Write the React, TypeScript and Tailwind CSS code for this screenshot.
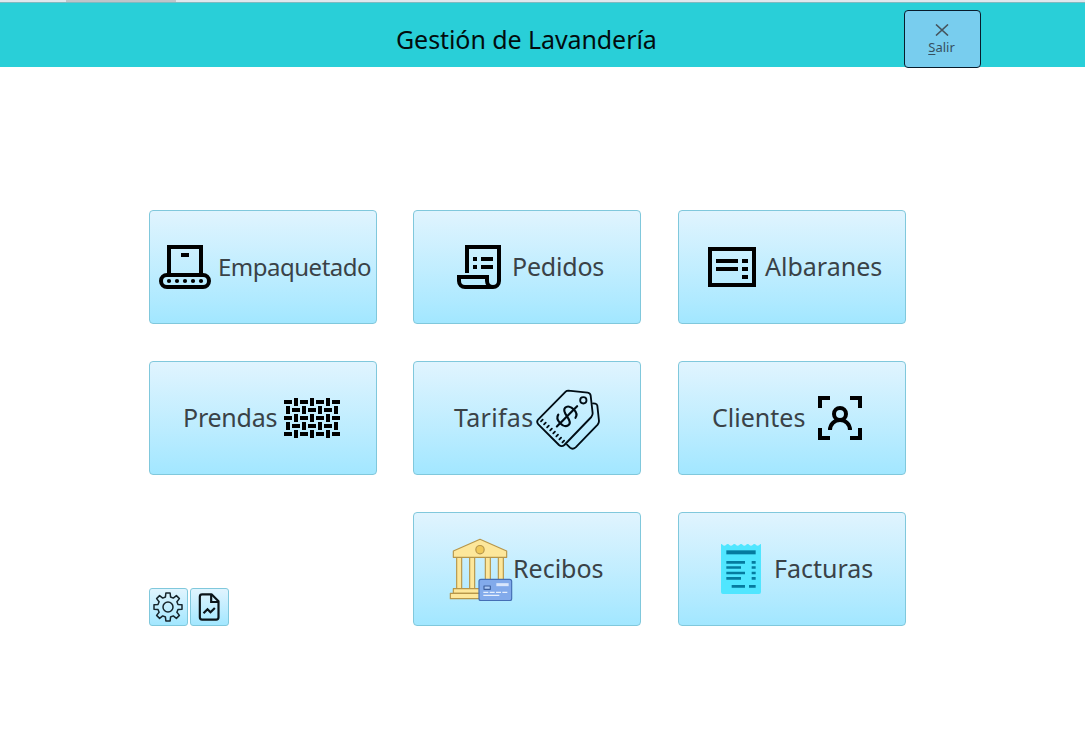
import React from "react";

function PackageIcon() {
  return (
    <svg className="h-16 w-[52px] shrink-0" viewBox="57 105 156 192" fill="none" stroke="#000" strokeWidth="12">
      <path d="M87 225V141H183V225" />
      <path d="M123 165H147" />
      <rect x="63" y="225" width="144" height="36" rx="18" />
      <g fill="#000" stroke="none">
        {[87, 111, 135, 159, 183].map((x) => (
          <circle key={x} cx={x} cy="243" r="6.3" />
        ))}
      </g>
    </svg>
  );
}

function OrderIcon() {
  return (
    <svg className="h-16 w-11 shrink-0" viewBox="156 105 132 192" fill="none" stroke="#000" strokeWidth="12">
      <path d="M186 219V141H282V243a18 18 0 0 1-18 18H180a18 18 0 0 1-18-18V231H246V243a18 18 0 0 0 18 18" />
      <path d="M204 177h12M228 177h36M204 201h12M228 201h36" />
    </svg>
  );
}

function NoteIcon() {
  return (
    <svg className="h-16 w-12 shrink-0" viewBox="114 105 144 192" fill="none" stroke="#000" strokeWidth="12">
      <rect x="120" y="147" width="132" height="108" />
      <path d="M138 183h66M138 207h66M216 183h18M216 207h18M216 231h18" />
    </svg>
  );
}

function FabricIcon() {
  return (
    <svg className="h-16 w-14 shrink-0" viewBox="432 102 168 192" fill="none" stroke="#000" strokeWidth="12">
      {[150, 198, 246].map((y) => (
        <g key={y}>
          <path d={`M432 ${y}h24M480 ${y}h24M528 ${y}h24M576 ${y}h24`} />
          <path d={`M468 ${y - 12}v24M516 ${y - 12}v24M564 ${y - 12}v24`} />
        </g>
      ))}
      {[174, 222].map((y) => (
        <g key={y}>
          <path d={`M456 ${y}h24M504 ${y}h24M552 ${y}h24`} />
          <path d={`M444 ${y - 12}v24M492 ${y - 12}v24M540 ${y - 12}v24M588 ${y - 12}v24`} />
        </g>
      ))}
    </svg>
  );
}

function TagIcon() {
  return (
    <svg
      className="size-16 shrink-0"
      viewBox="393 102 192 192"
      fill="none"
      stroke="#000c14"
      strokeWidth="5.5"
      strokeLinecap="round"
      strokeLinejoin="round"
    >
      <path d="M490 116L548 122Q556 123 557 131L563 184Q563 190 559 195L478 279Q470 286 462 279L400 217Q393 209 400 202L482 119Q485 116 490 116Z" />
      <path d="M564 154L571 155Q576 156 577 161L582 207Q582 213 578 218L512 286Q503 294 495 287L486 278" />
      <circle cx="535" cy="145" r="9.5" />
      {[0, 1, 2, 3, 4, 5, 6, 7].map((i) => (
        <path key={i} d={`M${408 + i * 9.2} ${208 + i * 9}l5 -5`} strokeWidth="5.5" />
      ))}
      <g transform="translate(486 193) rotate(45)" strokeWidth="6.5">
        <path d="M0 -43V43" />
        <path d="M21 -15C19 -25 11 -29 0 -29C-13 -29 -22 -23 -22 -14C-22 -5 -12 -2 0 0C12 2 22 6 22 14C22 23 13 29 0 29C-11 29 -20 25 -22 15" />
      </g>
    </svg>
  );
}

function ClientIcon() {
  return (
    <svg className="h-16 w-11 shrink-0" viewBox="444 102 132 192" fill="none" stroke="#000" strokeWidth="12">
      <path d="M450 168V138H480M540 138H570V168M570 228V258H540M480 258H450V228" />
      <circle cx="510" cy="186" r="18" />
      <path d="M480 234a30 30 0 0 1 60 0" />
    </svg>
  );
}

function BankIcon() {
  return (
    <svg className="size-16 shrink-0" viewBox="132 99 192 192" fill="#fde79b" stroke="#b7964a" strokeWidth="3.5" strokeLinejoin="round">
      {[155, 194, 241, 280].map((x) => (
        <rect key={x} x={x} y="160" width="15" height="94" />
      ))}
      <path d="M225 106L305 141V160H145V141Z" />
      <circle cx="225" cy="137" r="12.5" fill="#f0c95a" />
      <rect x="145" y="254" width="162" height="14" />
      <rect x="136" y="268" width="170" height="16" />
      <rect x="222" y="226" width="98" height="64" rx="6" fill="#82aaeb" stroke="#456fb5" />
      <rect x="237" y="246" width="19" height="10" fill="#a9c7f5" stroke="#3d609f" />
      <path d="M274 242H311" stroke="#d9e6fc" strokeWidth="9" />
      <path d="M235 265h15M254 265h15M273 265h15M292 265h15M235 274h48" stroke="#e6effd" strokeWidth="4" />
    </svg>
  );
}

function InvoiceIcon() {
  return (
    <svg className="h-16 w-10 shrink-0" viewBox="153 99 120 192" fill="none" stroke="#057b9f">
      <path
        d="M153 120q4 0 5 3q5 4 10 0q2-3 5-3q4 0 5 3q5 4 10 0q2-3 5-3q4 0 5 3q5 4 10 0q2-3 5-3q4 0 5 3q5 4 10 0q2-3 5-3q4 0 5 3q5 4 10 0q2-3 5-3q4 0 5 3q5 4 10 0q2-3 5-3V264q0 6-6 6H159q-6 0-6-6Z"
        fill="#50e6ff"
        stroke="none"
      />
      <path d="M169 145h88" strokeWidth="12" />
      <path
        d="M169 175h56M169 190.500h44M169 207h56M169 223h44M185 247h40M237 247h20M245 175h12M245 190.500h12M245 207h12M245 223h12"
        strokeWidth="8"
      />
    </svg>
  );
}

const gearPath = (() => {
  const points: string[] = [];
  for (let i = 0; i < 8; i++) {
    const middle = (i * Math.PI) / 4;
    const corners: [number, number][] = [
      [-0.25, 31],
      [-0.15, 42.5],
      [0.15, 42.5],
      [0.25, 31],
    ];
    corners.forEach(([offset, radius]) => {
      const x = radius * Math.sin(middle + offset);
      const y = -radius * Math.cos(middle + offset);
      points.push(`${x.toFixed(1)} ${y.toFixed(1)}`);
    });
  }
  return `M${points.join("L")}Z`;
})();

function GearIcon() {
  return (
    <svg className="size-8" viewBox="-48 -48 96 96" fill="none" stroke="#17252c" strokeWidth="4.5" strokeLinejoin="round">
      <path d={gearPath} />
      <circle r="15" />
    </svg>
  );
}

function ReportIcon() {
  return (
    <svg className="size-8" viewBox="158.5 34 96 96" fill="none" stroke="#0b1419" strokeWidth="6.500">
      <path d="M186 44H214L235 65V113Q235 120 228 120H186Q179 120 179 113V51Q179 44 186 44Z" strokeLinejoin="round" />
      <path d="M213 45V67H234" />
      <path d="M190 101L202 89L211 98L224 85" />
    </svg>
  );
}

const cardClass =
  "flex h-[114px] w-[228px] items-center rounded-[4px] border border-[#80c8dc] bg-linear-to-b from-[#e0f4fe] to-[#a2e7ff] text-[25px] leading-none whitespace-nowrap text-[#3a4247]";
const smallClass =
  "flex h-[38px] w-[39px] items-center justify-center rounded-[3px] border border-[#80c8dc] bg-linear-to-b from-[#e0f4fe] to-[#a2e7ff] pr-[2px]";

export default function App() {
  return (
    <div className="h-[742px] w-[1085px] overflow-hidden bg-white font-['Noto_Sans',sans-serif]">
      <div className="h-[2px] bg-[#dfe7ed] pl-[66px]">
        <div className="h-[2px] w-[110px] bg-[#bfc4c9]" />
      </div>
      <header className="flex h-[65px] items-start border-t border-[#7fb9c0] bg-[#29cfd8] pl-[396px]">
        <h1 className="w-[508px] pt-[23px] text-[25px] leading-[26px] tracking-[-0.08px] whitespace-nowrap text-[#020c0e]">
          Gestión de Lavandería
        </h1>
        <button className="mt-[7px] flex h-[58px] w-[77px] shrink-0 flex-col items-center rounded-[4px] border border-[#071c2c] bg-[#78cdee] pt-[13px] pr-[2px]">
          <svg className="h-[12px] w-[14px]" viewBox="0 0 14 12" fill="none" stroke="#46545c" strokeWidth="1.6">
            <path d="M1 .5L13 11.500M13 .5L1 11.500" />
          </svg>
          <span className="mt-[4px] text-[13px] leading-[14px] text-[#36505f]">
            <span className="underline underline-offset-2">S</span>alir
          </span>
        </button>
      </header>
      <main className="grid grid-cols-[264px_265px_228px] gap-y-[37px] pt-[143px] pl-[149px]">
        <button className={`${cardClass} pl-[9px]`}>
          <PackageIcon />
          <span className="ml-[7px] text-[24px] tracking-[-0.5px]">Empaquetado</span>
        </button>
        <button className={`${cardClass} pl-[43px]`}>
          <OrderIcon />
          <span className="mb-px ml-[11px] tracking-[-0.2px]">Pedidos</span>
        </button>
        <button className={`${cardClass} pl-[29px]`}>
          <NoteIcon />
          <span className="mb-px ml-[9px]">Albaranes</span>
        </button>

        <button className={`${cardClass} pl-[33px]`}>
          <span className="mb-px w-[101px] shrink-0 text-left tracking-[-0.25px]">Prendas</span>
          <FabricIcon />
        </button>
        <button className={`${cardClass} pl-[40px]`}>
          <span className="mb-px w-[82px] shrink-0 text-left tracking-[0.3px]">Tarifas</span>
          <TagIcon />
        </button>
        <button className={`${cardClass} pl-[33px]`}>
          <span className="mb-px w-[106px] shrink-0 text-left">Clientes</span>
          <ClientIcon />
        </button>

        <div className="flex gap-[2px] self-end">
          <button className={smallClass} aria-label="Ajustes">
            <GearIcon />
          </button>
          <button className={smallClass} aria-label="Informes">
            <ReportIcon />
          </button>
        </div>
        <button className={`${cardClass} pl-[35px]`}>
          <BankIcon />
          <span className="mb-px">Recibos</span>
        </button>
        <button className={`${cardClass} pl-[42px]`}>
          <InvoiceIcon />
          <span className="mb-px ml-[13px]">Facturas</span>
        </button>
      </main>
    </div>
  );
}
